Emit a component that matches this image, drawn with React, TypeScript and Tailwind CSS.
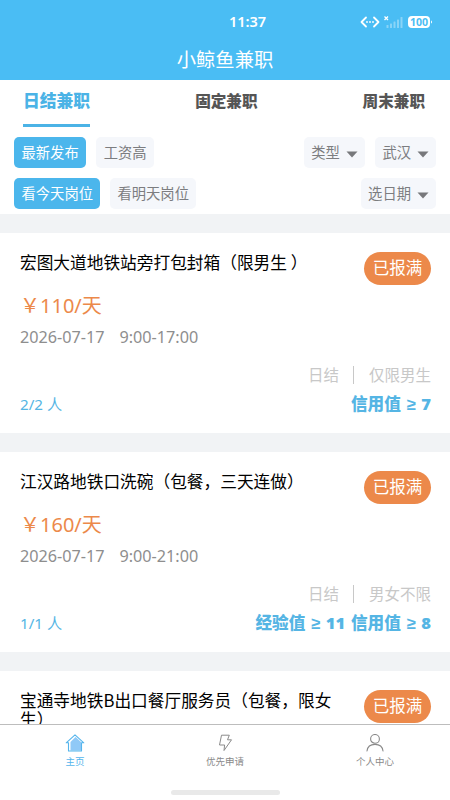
import clsx from 'clsx'

const tabs = ['日结兼职', '固定兼职', '周末兼职']

type Job = {
  title: string
  status: string
  details?: {
    price: string
    date: string
    time: string
    people: string
    gender: string
    requirement: string
  }
}

const jobs: Job[] = [
  {
    title: '宏图大道地铁站旁打包封箱（限男生 ）',
    status: '已报满',
    details: {
      price: '￥110/天',
      date: '2026-07-17',
      time: '9:00-17:00',
      people: '2/2 人',
      gender: '仅限男生',
      requirement: '信用值 ≥ 7',
    },
  },
  {
    title: '江汉路地铁口洗碗（包餐，三天连做）',
    status: '已报满',
    details: {
      price: '￥160/天',
      date: '2026-07-17',
      time: '9:00-21:00',
      people: '1/1 人',
      gender: '男女不限',
      requirement: '经验值 ≥ 11 信用值 ≥ 8',
    },
  },
  {
    title: '宝通寺地铁B出口餐厅服务员（包餐，限女生）',
    status: '已报满',
  },
]

function StatusIcons() {
  return (
    <svg width="74" height="16" viewBox="0 0 74 16" fill="none">
      <g stroke="#fff" strokeWidth="1.8" strokeLinecap="round" strokeLinejoin="round">
        <path d="M6 3.5 1.5 8 6 12.5" />
        <path d="M14 3.5 18.5 8 14 12.5" />
      </g>
      <g fill="#fff">
        <circle cx="7" cy="8" r="0.9" />
        <circle cx="10" cy="8" r="0.9" />
        <circle cx="13" cy="8" r="0.9" />
      </g>
      <path d="m24.5 2.5 3.5 3.5m0-3.5L24.5 6" stroke="#fff" strokeWidth="1.3" />
      <g fill="#fff" opacity="0.35">
        <rect x="26.5" y="11" width="2" height="3" rx="0.5" />
        <rect x="30" y="9.5" width="2" height="4.5" rx="0.5" />
        <rect x="33.5" y="7.5" width="2" height="6.5" rx="0.5" />
        <rect x="37" y="5.5" width="2" height="8.5" rx="0.5" />
        <rect x="40.5" y="3" width="2" height="11" rx="0.5" />
      </g>
      <rect x="48" y="2" width="22" height="12" rx="4" fill="#fff" />
      <path d="M71 6.5c1.3.3 1.3 2.7 0 3z" fill="#fff" />
      <text x="59" y="12" textAnchor="middle" fontSize="10.5" fontWeight="700" fontFamily="Noto Sans" fill="#4abdf4">
        100
      </text>
    </svg>
  )
}

function Header() {
  return (
    <header className="h-20 shrink-0 bg-[#4abdf4] text-white">
      <div className="grid h-[44px] grid-cols-[1fr_auto_1fr] items-center">
        <div />
        <span className="ml-[45px] font-['Noto_Sans'] text-[14.5px] font-semibold">11:37</span>
        <div className="flex justify-end pr-[16px]">
          <StatusIcons />
        </div>
      </div>
      <h1 className="text-center text-[19.3px] leading-[30px]">小鲸鱼兼职</h1>
    </header>
  )
}

function Chip({ label, active, dropdown }: { label: string; active?: boolean; dropdown?: boolean }) {
  return (
    <button
      className={clsx(
        'flex h-[31px] items-center rounded-[5px] pb-[2px] text-[14.3px] whitespace-nowrap',
        active ? 'bg-[#4bb6ec] text-white' : 'bg-[#f5f7fb] text-[#7c7d80]',
        dropdown ? 'pr-[7px] pl-[7.5px]' : 'px-[7.5px]',
      )}
    >
      {label}
      {dropdown && (
        <svg className="mt-[5px] ml-[6px]" width="12" height="7" viewBox="0 0 12 7">
          <path d="M0.5 0.5h11L6 6.5z" fill="#77787b" />
        </svg>
      )}
    </button>
  )
}

function JobCard({ job }: { job: Job }) {
  const { title, status, details } = job
  return (
    <article className="h-[200px] shrink-0 bg-white pr-[19px] pl-5">
      <div className="flex items-start justify-between pt-[19px]">
        <h2 className="w-[324px] pt-px text-[16.7px] leading-[19px] text-black">{title}</h2>
        <span className="-mb-4 h-[33px] w-[67px] rounded-full bg-[#ec894a] text-center text-[16.5px] leading-[31px] text-white">
          {status}
        </span>
      </div>
      {details && (
        <>
          <p className="mt-[19px] font-['Noto_Sans','Noto_Sans_CJK_SC',sans-serif] text-[20px] leading-[30px] text-[#ec894a]">
            {details.price}
          </p>
          <p className="flex gap-[15px] font-['Noto_Sans','Noto_Sans_CJK_SC',sans-serif] text-[16.2px] leading-[32px] text-[#8e8e8e]">
            <span>{details.date}</span>
            <span>{details.time}</span>
          </p>
          <div className="mt-[13px] flex h-[18px] items-center justify-end text-[15.5px] text-[#c8c8c8]">
            <span>日结</span>
            <span className="mr-[15px] ml-[14px] h-[18px] w-px bg-[#c8c8c8]" />
            <span>{details.gender}</span>
          </div>
          <div className="mt-[5px] flex items-center justify-between leading-[30px] text-[#55b5e4]">
            <span className="font-['Noto_Sans','Noto_Sans_CJK_SC',sans-serif] text-[15.2px]">{details.people}</span>
            <span className="font-['Noto_Sans','Liberation_Sans','Noto_Sans_CJK_SC',sans-serif] text-[16.6px] font-black [word-spacing:1.4px]">
              {details.requirement}
            </span>
          </div>
        </>
      )}
    </article>
  )
}

function HomeIcon() {
  return (
    <svg width="20" height="18" viewBox="0 0 20 18">
      <path d="M5.5 8v8.5H16V8l-5.5-5z" fill="#90c9f7" />
      <path
        d="M1.2 8.8 10 .8l8.8 8H16.5V17h-13V8.8z"
        fill="none"
        stroke="#55b5ec"
        strokeWidth="1.1"
        strokeLinejoin="round"
      />
    </svg>
  )
}

function BoltIcon() {
  return (
    <svg width="20" height="18" viewBox="0 0 20 18" fill="none" stroke="#8a8a8a" strokeLinejoin="round">
      <path d="M6.5 1.2h7.8l-1.8 4.6h4L9 16.5l.6-5.5H4.5z" />
    </svg>
  )
}

function UserIcon() {
  return (
    <svg width="20" height="18" viewBox="0 0 20 18" fill="none" stroke="#8a8a8a" strokeWidth="1.1" strokeLinecap="round">
      <circle cx="10" cy="4.9" r="4.4" />
      <path d="M2 17c.5-4.4 3.8-6.6 8-6.6s7.5 2.2 8 6.6" />
    </svg>
  )
}

const navItems = [
  { label: '主页', icon: HomeIcon, active: true },
  { label: '优先申请', icon: BoltIcon },
  { label: '个人中心', icon: UserIcon },
]

export default function App() {
  return (
    <div className="flex h-[800px] w-[450px] flex-col overflow-hidden bg-white font-['Noto_Sans_CJK_SC',sans-serif]">
      <Header />

      <nav className="flex h-[47px] shrink-0 items-start justify-between pr-[25px] pl-[23px]">
        {tabs.map((tab, i) => (
          <button
            key={tab}
            className={clsx(
              'h-[47px] border-b-[3px] pb-[3px] font-black',
              i === 0 ? 'border-[#4bb3e6] text-[16.8px] text-[#4bb3e6]' : 'border-transparent text-[15.6px] text-[#555]',
            )}
          >
            {tab}
          </button>
        ))}
      </nav>

      <section className="flex h-[87px] shrink-0 flex-col gap-[10px] px-[14px] pt-[10px]">
        <div className="flex gap-[10px]">
          <Chip label="最新发布" active />
          <Chip label="工资高" />
          <div className="ml-auto flex gap-[10px]">
            <Chip label="类型" dropdown />
            <Chip label="武汉" dropdown />
          </div>
        </div>
        <div className="flex gap-[9.5px]">
          <Chip label="看今天岗位" active />
          <Chip label="看明天岗位" />
          <div className="ml-auto">
            <Chip label="选日期" dropdown />
          </div>
        </div>
      </section>

      <main className="flex min-h-0 flex-1 flex-col gap-[19px] overflow-hidden bg-[#f1f3f5] pt-[19px]">
        {jobs.map((job) => (
          <JobCard key={job.title} job={job} />
        ))}
      </main>

      <footer className="flex h-[76px] shrink-0 flex-col items-center border-t border-[#bdbdbd] bg-white">
        <div className="grid w-full grid-cols-3 pt-[9px]">
          {navItems.map(({ label, icon: Icon, active }) => (
            <button
              key={label}
              className={clsx('flex flex-col items-center text-[9.5px] leading-[18px]', active ? 'text-[#55b5ec]' : 'text-[#8a8a8a]')}
            >
              <Icon />
              {label}
            </button>
          ))}
        </div>
        <div className="mt-[20px] h-[5px] w-[109px] rounded-full bg-[#e9e9e9]" />
      </footer>
    </div>
  )
}
